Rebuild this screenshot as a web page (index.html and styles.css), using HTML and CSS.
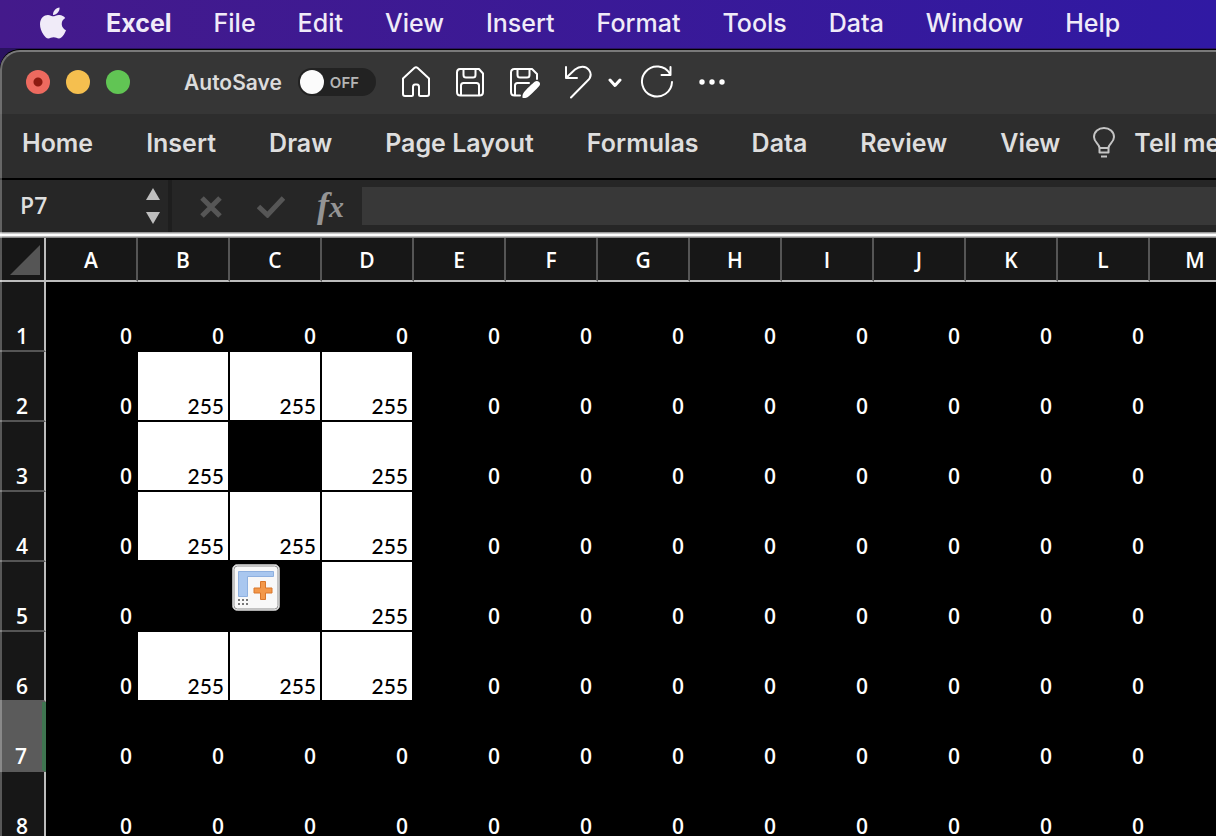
FILE: index.html
```html
<!DOCTYPE html>
<html lang="en">
<head>
<meta charset="utf-8">
<meta name="viewport" content="width=device-width, initial-scale=1">
<title>Excel</title>
<link rel="stylesheet" href="styles.css">
</head>
<body>
<nav class="menubar" aria-label="Application menu">
  <button class="apple" aria-label="Apple menu"><svg viewBox="4 32 376 448" width="26" height="32"><path fill="currentColor" d="M318.700 268.700c-.2-36.700 16.400-64.400 50-84.800-18.800-26.900-47.200-41.700-84.700-44.600-35.500-2.800-74.300 20.700-88.500 20.700-15 0-49.400-19.700-76.400-19.700C63.300 141.200 4 184.800 4 273.500q0 39.300 14.400 81.200c12.800 36.700 59 126.700 107.200 125.200 25.200-.6 43-17.900 75.800-17.900 31.800 0 48.300 17.900 76.400 17.900 48.600-.7 90.400-82.500 102.600-119.300-65.200-30.700-61.700-90-61.700-91.900zm-56.600-164.200c27.300-32.400 24.800-61.900 24-72.500-24.100 1.400-52 16.400-67.900 34.900-17.500 19.800-27.800 44.300-25.600 71.900 26.100 2 49.900-11.400 69.500-34.300z"/></svg></button>
  <button class="app-name">Excel</button>
  <button>File</button>
  <button>Edit</button>
  <button>View</button>
  <button>Insert</button>
  <button>Format</button>
  <button>Tools</button>
  <button>Data</button>
  <button>Window</button>
  <button>Help</button>
</nav>
<main class="window">
  <header class="titlebar">
    <div class="lights">
      <button class="light close" aria-label="Close"></button>
      <button class="light minimize" aria-label="Minimize"></button>
      <button class="light zoom" aria-label="Zoom"></button>
    </div>
    <label class="autosave"><span>AutoSave</span><span class="switch"><input type="checkbox"><span class="state">OFF</span></span></label>
    <div class="quick">
      <button aria-label="Home"><svg viewBox="0 0 32 34" width="32" height="34"><path d="M3 13.500 14.300 3q1.700-1.400 3.400 0L29 13.500V29q0 2-2 2h-6.500q-1.500 0-1.500-1.500V22q0-2.500-2-2.500h-2q-2 0-2 2.500v7.500Q13 31 11.500 31H5q-2 0-2-2z"/></svg></button>
      <button aria-label="Save"><svg viewBox="0 0 32 34" width="32" height="34"><path d="M6 4h19l4 4.500V27q0 3.500-3.500 3.500h-19Q3 30.500 3 27V7.500Q3 4 6 4zM9.500 4v6q0 2.500 2.500 2.500h7q2.500 0 2.500-2.500V4M7 30V20.500q0-2.500 2.500-2.500h13q2.500 0 2.500 2.500V30"/></svg></button>
      <button aria-label="Save as"><svg viewBox="0 0 32 34" width="32" height="34"><path d="M12 30.500H6.500Q3 30.500 3 27V7.500Q3 4 6.500 4H24l5 5v5M9.500 4v6q0 2.500 2.500 2.500h7q2.500 0 2.500-2.500V4M7 30V20.500q0-2.500 2.500-2.500H21"/><path class="solid" d="M27 16.500c2.500-1.700 6 .8 4.800 3.500-.7 1.800-9 9.800-12 12-1.800 1.300-4.300.9-5.300.7-.2-2 .2-3.900 1.300-5.300 2.200-2.800 9.200-9.500 11.200-10.900z"/></svg></button>
      <button class="undo" aria-label="Undo"><svg viewBox="0 0 28 34" width="28" height="34"><path d="M2 2v11h11M2 13l9-8.500C16 .5 22 .8 25 5c2.800 4 1.500 8.200-2 11.200L7 32.500"/></svg></button>
      <button class="chevron" aria-label="Undo history"><svg viewBox="0 0 14 34" width="14" height="34"><path class="heavy" d="m2 15 5 5.500 5-5.500"/></svg></button>
      <button class="redo" aria-label="Repeat"><svg viewBox="0 0 34 34" width="34" height="34"><path d="M30 9A15 15 0 1 0 32 17M30.500 2v8h-9"/></svg></button>
      <button class="more" aria-label="More"><svg viewBox="0 0 28 34" width="28" height="34"><g class="solid"><circle cx="4" cy="17" r="2.700"/><circle cx="14" cy="17" r="2.700"/><circle cx="24" cy="17" r="2.700"/></g></svg></button>
    </div>
  </header>
  <nav class="ribbon" aria-label="Ribbon">
    <button>Home</button>
    <button>Insert</button>
    <button>Draw</button>
    <button>Page Layout</button>
    <button>Formulas</button>
    <button>Data</button>
    <button>Review</button>
    <button>View</button>
    <button class="tell"><svg viewBox="0 0 22 32" width="22" height="32"><path d="M6.500 21c0-4-5.500-5.500-5.500-11C1 4.500 5.500 1 11 1s10 3.500 10 9c0 5.500-5.500 7-5.500 11zM6.500 21v4.500h9V21M8 29.500h6"/></svg>Tell me</button>
  </nav>
  <section class="formula" aria-label="Formula bar">
    <div class="namebox">
      <input aria-label="Name box" value="P7">
      <div class="stepper">
        <button aria-label="Previous"><svg viewBox="0 0 14 12" width="14" height="12"><path d="M7 0l7 12H0z"/></svg></button>
        <button aria-label="Next"><svg viewBox="0 0 14 12" width="14" height="12"><path d="M0 0h14L7 12z"/></svg></button>
      </div>
    </div>
    <div class="actions">
      <button aria-label="Cancel"><svg viewBox="0 0 28 24" width="28" height="24"><path d="m5 4 18 18M23 4 5 22"/></svg></button>
      <button aria-label="Enter"><svg viewBox="0 0 28 24" width="28" height="24"><path d="m1.500 12.500 9 8.500L26.500 4"/></svg></button>
      <button class="fx" aria-label="Insert function"><i>f</i><i class="x">x</i></button>
    </div>
    <input class="entry" aria-label="Formula">
  </section>
  <section class="sheet">
    <table>
      <colgroup><col class="head-col"><col span="13"></colgroup>
      <thead>
        <tr><th class="corner"><svg viewBox="0 0 30 30" width="30" height="30"><path d="M30 0v30H0z"/></svg></th><th>A</th><th>B</th><th>C</th><th>D</th><th>E</th><th>F</th><th>G</th><th>H</th><th>I</th><th>J</th><th>K</th><th>L</th><th>M</th></tr>
      </thead>
      <tbody>
        <tr><th>1</th><td>0</td><td>0</td><td>0</td><td>0</td><td>0</td><td>0</td><td>0</td><td>0</td><td>0</td><td>0</td><td>0</td><td>0</td><td></td></tr>
        <tr><th>2</th><td>0</td><td class="on">255</td><td class="on">255</td><td class="on">255</td><td>0</td><td>0</td><td>0</td><td>0</td><td>0</td><td>0</td><td>0</td><td>0</td><td></td></tr>
        <tr><th>3</th><td>0</td><td class="on">255</td><td></td><td class="on">255</td><td>0</td><td>0</td><td>0</td><td>0</td><td>0</td><td>0</td><td>0</td><td>0</td><td></td></tr>
        <tr><th>4</th><td>0</td><td class="on">255</td><td class="on">255</td><td class="on">255</td><td>0</td><td>0</td><td>0</td><td>0</td><td>0</td><td>0</td><td>0</td><td>0</td><td></td></tr>
        <tr><th>5</th><td>0</td><td></td><td class="anchor"><button class="fill" aria-label="Auto fill options"><svg viewBox="0 0 48 48" width="48" height="48"><rect x=".5" y=".5" width="47" height="46" rx="5" fill="#fff" stroke="#aaa"/><rect x="2" y="2" width="44" height="43" rx="3.500" fill="#f8f8f8" stroke="#8d8d8d"/><path fill="#a9c7ef" stroke="#8eb0df" d="M6.500 7.500h35v5h-26v20h-9z"/><path fill="#f3984a" stroke="#d9762b" d="M28.500 17.500h5v6.500h6.500v5h-6.500v6.500h-5V29H22v-5h6.500z"/><path fill="#777" d="M6 35h2v2H6zm4 0h2v2h-2zm4 0h2v2h-2zm-8 4h2v2H6zm4 0h2v2h-2zm4 0h2v2h-2z"/></svg></button></td><td class="on">255</td><td>0</td><td>0</td><td>0</td><td>0</td><td>0</td><td>0</td><td>0</td><td>0</td><td></td></tr>
        <tr class="before-active"><th>6</th><td>0</td><td class="on">255</td><td class="on">255</td><td class="on">255</td><td>0</td><td>0</td><td>0</td><td>0</td><td>0</td><td>0</td><td>0</td><td>0</td><td></td></tr>
        <tr class="active"><th>7</th><td>0</td><td>0</td><td>0</td><td>0</td><td>0</td><td>0</td><td>0</td><td>0</td><td>0</td><td>0</td><td>0</td><td>0</td><td></td></tr>
        <tr><th>8</th><td>0</td><td>0</td><td>0</td><td>0</td><td>0</td><td>0</td><td>0</td><td>0</td><td>0</td><td>0</td><td>0</td><td>0</td><td></td></tr>
      </tbody>
    </table>
  </section>
</main>
</body>
</html>
```
FILE: styles.css
```css
* { box-sizing: border-box; }
body {
  margin: 0;
  height: 100vh;
  overflow: hidden;
  display: flex;
  flex-direction: column;
  background: #2a1260;
  font-family: Inter, "Liberation Sans", sans-serif;
}
button {
  padding: 0;
  border: 0;
  background: none;
  color: inherit;
  font: inherit;
  white-space: nowrap;
  flex: none;
}
svg { display: block; }

.menubar {
  flex: none;
  height: 48px;
  padding: 0 0 2px 40px;
  display: flex;
  align-items: center;
  gap: 42px;
  background: linear-gradient(90deg, #441a8b, #3019a3);
  color: #f0ebf8;
  font-size: 25px;
  font-weight: 500;
  text-shadow: 0 2px 4px rgba(0, 0, 0, .3);
}
.menubar .app-name { margin-left: -2px; font-weight: 700; }

.window {
  position: relative;
  flex: 1;
  min-height: 0;
  display: flex;
  flex-direction: column;
  overflow: hidden;
  margin-top: 1px;
  border-top: 1px solid #000;
  border-top-left-radius: 20px;
  background: #000;
}
.window::after {
  content: "";
  position: absolute;
  inset: 0 -2px -2px 0;
  border: 2px solid rgba(255, 255, 255, .28);
  border-top-color: #7a7a7a;
  border-top-left-radius: 20px;
  pointer-events: none;
}

.titlebar {
  flex: none;
  height: 64px;
  padding-left: 26px;
  display: flex;
  align-items: center;
  background: #363636;
}
.lights { display: flex; gap: 16px; }
.light { width: 24px; height: 24px; border-radius: 50%; }
.close { background: radial-gradient(circle, #8c1a10 0 4px, #ed6a5f 5px); }
.minimize { background: #f5bf4f; }
.zoom { background: #61c554; }
.autosave {
  margin-left: 54px;
  display: flex;
  align-items: center;
  gap: 16px;
  color: #dcdcdc;
  font-size: 21px;
  font-weight: 600;
}
.switch {
  width: 78px;
  height: 28px;
  border-radius: 14px;
  display: flex;
  align-items: center;
  gap: 6px;
  padding-left: 2px;
  background: #222;
}
.switch input {
  appearance: none;
  width: 24px;
  height: 24px;
  margin: 0;
  border-radius: 50%;
  background: #fbfbfb;
}
.state { color: #b5b5b5; font-size: 15px; font-weight: 600; }
.quick {
  margin-left: 24px;
  display: flex;
  align-items: center;
  gap: 22px;
}
.quick svg { fill: none; stroke: #fff; stroke-width: 2; stroke-linecap: round; stroke-linejoin: round; }
.quick .solid { fill: #fff; stroke: none; }
.quick .heavy { stroke-width: 3; }
.quick .undo { margin-left: 2px; }
.quick .chevron { margin-left: -6px; }
.quick .redo { margin-left: -4px; }
.quick .more { margin-left: 2px; }

.ribbon {
  flex: none;
  height: 66px;
  padding: 0 0 6px 22px;
  display: flex;
  align-items: center;
  gap: 53px;
  border-bottom: 2px solid #000;
  background: #2d2d2d;
  color: #dedede;
  font-size: 25px;
  font-weight: 600;
}
.tell { display: flex; align-items: center; gap: 19px; margin-left: -20px; }
.tell svg { fill: none; stroke: #c4c4c4; stroke-width: 2; stroke-linejoin: round; }

.formula {
  flex: none;
  height: 52px;
  display: flex;
  align-items: center;
  background: #262626;
}
.namebox {
  width: 172px;
  height: 52px;
  padding: 0 8px 0 20px;
  display: flex;
  align-items: center;
  justify-content: space-between;
  border-right: 4px solid #1e1e1e;
}
.namebox input {
  width: 100px;
  padding: 0 0 2px;
  border: 0;
  background: none;
  color: #dedede;
  font: 600 23px "Open Sans", sans-serif;
}
.stepper { display: flex; flex-direction: column; gap: 12px; }
.stepper svg { fill: #bebebe; }
.actions { width: 190px; padding: 0 18px 0 25px; display: flex; align-items: center; justify-content: space-between; }
.actions svg { fill: none; stroke: #565656; stroke-width: 5; }
.fx { color: #949494; font: bold 36px/40px "Liberation Serif", serif; }
.fx .x { font-size: 30px; }
.entry { flex: 1; min-width: 0; height: 38px; border: 0; background: #383838; color: #fff; }

.sheet {
  flex: 1;
  min-height: 0;
  overflow: hidden;
  border-top: 6px double #fff;
  border-image: linear-gradient(#999 0 1px, #ccc 1px 2px, #fff 2px 4px, #bbb 4px 5px, #888 5px) 6;
  font-family: "Open Sans", sans-serif;
}
table { width: 1242px; table-layout: fixed; border-collapse: separate; border-spacing: 0; }
col { width: 92px; }
.head-col { width: 46px; }
th, td { padding: 0; color: #fff; font-size: 21px; line-height: 26px; }
th { background: #171717; font-weight: 600; }
thead th { height: 44px; padding-top: 2px; border-right: 2px solid #555; border-bottom: 2px solid #bcbcbc; }
thead .corner { border-right-color: #bcbcbc; padding: 2px 0 0 10px; }
.corner path { fill: #555; }
tbody th {
  height: 70px;
  padding-bottom: 1px;
  vertical-align: bottom;
  border-right: 2px solid #bcbcbc;
  border-bottom: 2px solid #555;
}
td {
  padding: 0 4px 1px 0;
  vertical-align: bottom;
  text-align: right;
  font-weight: 600;
  border-right: 2px solid #000;
  border-bottom: 2px solid #000;
}
.on { background: #fff; color: #000; font-family: Lato, sans-serif; font-weight: 500; }
.before-active th { border-bottom-color: #5b5b5b; }
.active th { background: #5b5b5b; border-right: 4px solid #3f7550; border-bottom-color: #5b5b5b; }
.anchor { position: relative; }
.fill { position: absolute; left: 2px; top: 2px; }
```
